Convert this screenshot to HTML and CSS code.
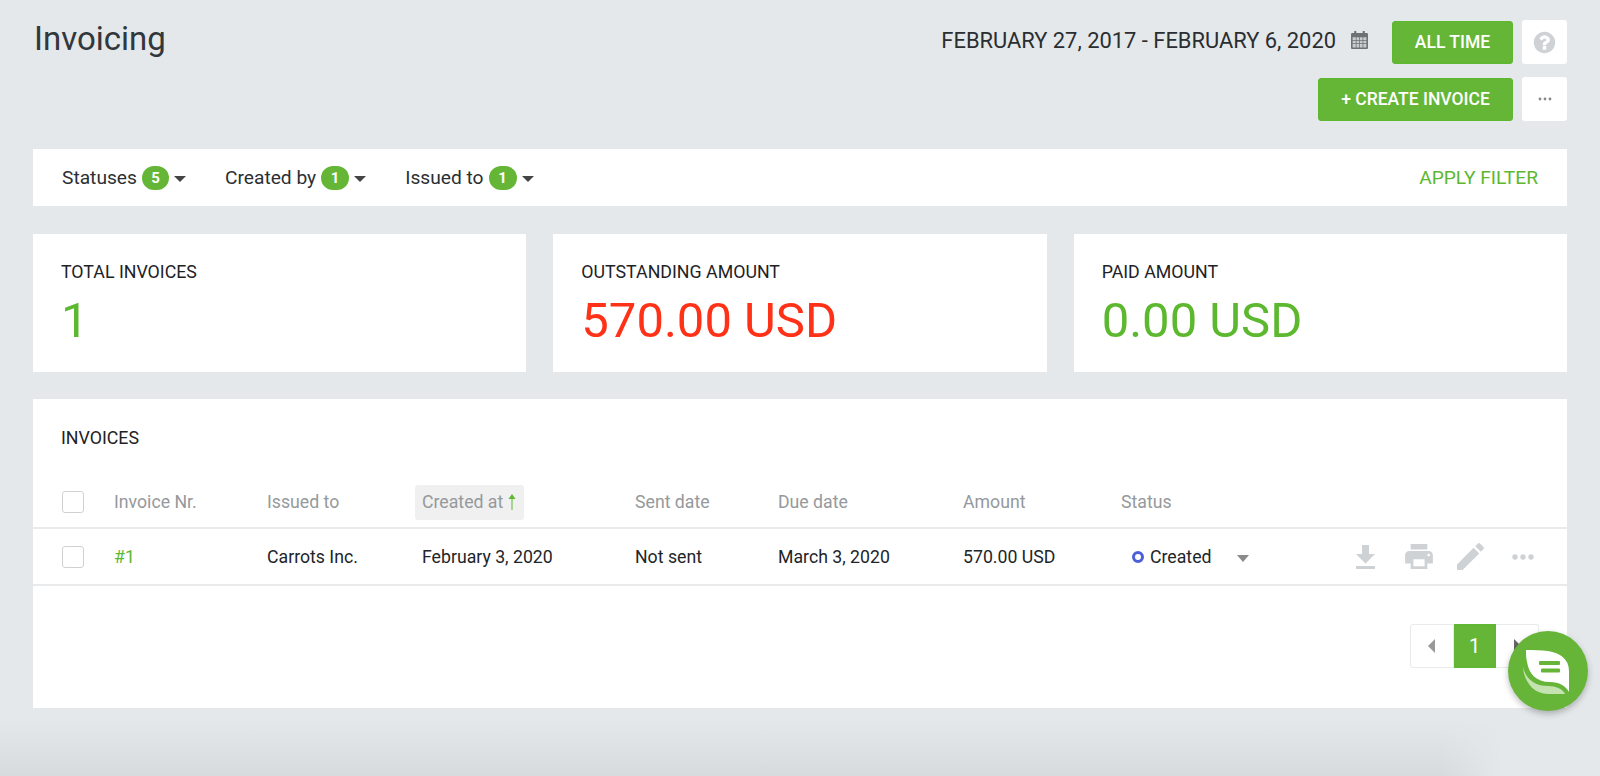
FILE: index.html
```html
<!DOCTYPE html>
<html lang="en">
<head>
  <meta charset="UTF-8">
  <title>Invoicing</title>
  <link rel="stylesheet" href="styles.css">
</head>
<body>
  <div class="page">
    <header class="top">
      <h1>Invoicing</h1>
      <div class="top-actions">
        <div class="action-row">
          <span class="date-range">FEBRUARY 27, 2017 - FEBRUARY 6, 2020</span>
          <svg class="cal-icon" viewBox="0 0 16 17">
            <path d="M3 0h2v2h6V0h2v2h2a1 1 0 0 1 1 1v13a1 1 0 0 1-1 1H1a1 1 0 0 1-1-1V3a1 1 0 0 1 1-1h2z" fill="#6d7174"/>
            <path d="M1.5 6h3v2.4h-3zM5.2 6h2.5v2.4H5.2zM8.4 6h2.5v2.4H8.4zM11.6 6h2.9v2.4h-2.9zM1.5 9.1h3v2.4h-3zM5.2 9.1h2.5v2.4H5.2zM8.4 9.1h2.5v2.4H8.4zM11.6 9.1h2.9v2.4h-2.9zM1.5 12.2h3v3.3h-3zM5.2 12.2h2.5v3.3H5.2zM8.4 12.2h2.5v3.3H8.4zM11.6 12.2h2.9v3.3h-2.9z" fill="#c9cccf"/>
          </svg>
          <button class="btn btn-time">ALL TIME</button>
          <span class="square-btn">
            <svg class="help-icon" viewBox="0 0 1792 1792"><path fill="#cfd2d5" d="M1024 1376v-192q0-14-9-23t-23-9H800q-14 0-23 9t-9 23v192q0 14 9 23t23 9h192q14 0 23-9t9-23zm256-672q0-88-55.5-163T1086 425t-170-41q-243 0-371 213-15 24 8 42l132 100q7 6 19 6 16 0 25-12 53-68 86-92 34-24 86-24 48 0 85.5 26t37.5 59q0 38-20 61t-68 45q-63 28-115.5 86.5T768 1020v36q0 14 9 23t23 9h192q14 0 23-9t9-23q0-19 21.5-49.5T1100 957q32-18 49-28.5t46-35 44.5-48 28-60.5 12.5-81zm384 192q0 209-103 385.5T1281 1561t-385 103-385-103-279.5-279.5T128 896t103-385.5T510.5 231 896 128t385 103 279.5 279.5T1664 896z"/></svg>
          </span>
        </div>
        <div class="action-row">
          <button class="btn btn-create">+ CREATE INVOICE</button>
          <span class="square-btn">
            <svg class="small-dots" viewBox="0 0 14 4"><circle cx="2" cy="2" r="1.4"/><circle cx="7" cy="2" r="1.4"/><circle cx="12" cy="2" r="1.4"/></svg>
          </span>
        </div>
      </div>
    </header>

    <section class="filter-bar">
      <div class="filter">Statuses <span class="count count-first">5</span><span class="caret"></span></div>
      <div class="filter">Created by <span class="count">1</span><span class="caret"></span></div>
      <div class="filter">Issued to <span class="count">1</span><span class="caret"></span></div>
      <a class="apply" href="#">APPLY FILTER</a>
    </section>

    <section class="stats">
      <div class="stat">
        <div class="stat-label">TOTAL INVOICES</div>
        <div class="stat-value green">1</div>
      </div>
      <div class="stat">
        <div class="stat-label">OUTSTANDING AMOUNT</div>
        <div class="stat-value red">570.00 USD</div>
      </div>
      <div class="stat">
        <div class="stat-label">PAID AMOUNT</div>
        <div class="stat-value green">0.00 USD</div>
      </div>
    </section>

    <section class="invoices">
      <h2>INVOICES</h2>
      <div class="row head-row">
        <span class="check"></span>
        <span>Invoice Nr.</span>
        <span>Issued to</span>
        <span class="sorted">Created at <svg class="arrow" viewBox="0 0 8 16"><path d="M4 0L7.5 5H4.5V16H3.5V5H.5z"/></svg></span>
        <span>Sent date</span>
        <span>Due date</span>
        <span>Amount</span>
        <span>Status</span>
      </div>
      <div class="row body-row">
        <span class="check"></span>
        <a class="inv-link" href="#">#1</a>
        <span>Carrots Inc.</span>
        <span class="created-cell">February 3, 2020</span>
        <span>Not sent</span>
        <span>March 3, 2020</span>
        <span>570.00 USD</span>
        <span class="status"><span class="dot"></span>Created<span class="status-caret"></span></span>
        <span class="row-icons">
          <svg class="icon-dl" viewBox="0 0 19 24"><path d="M6 0h7v9h6l-9.5 9.5L0 9h6zM0 21h19v3H0z"/></svg>
          <svg class="icon-print" viewBox="2 3 20 18"><path d="M19 8H5c-1.66 0-3 1.34-3 3v6h4v4h12v-4h4v-6c0-1.66-1.34-3-3-3zm-3 11H8v-5h8v5zm3-7c-.55 0-1-.45-1-1s.45-1 1-1 1 .45 1 1-.45 1-1 1zm-1-9H6v4h12V3z"/></svg>
          <svg class="icon-edit" viewBox="3 3 18 18"><path d="M3 17.25V21h3.75L17.81 9.94l-3.75-3.75L3 17.25zM20.71 7.04c.39-.39.39-1.02 0-1.41l-2.34-2.34c-.39-.39-1.02-.39-1.41 0l-1.83 1.83 3.75 3.75 1.83-1.83z"/></svg>
          <svg class="icon-dots" viewBox="0 0 22 6"><circle cx="3" cy="3" r="2.7"/><circle cx="11" cy="3" r="2.7"/><circle cx="19" cy="3" r="2.7"/></svg>
        </span>
      </div>
      <div class="pager">
        <span class="page-btn"><span class="tri-left"></span></span>
        <span class="page-btn current">1</span>
        <span class="page-btn"><span class="tri-right"></span></span>
      </div>
    </section>
  </div>

  <div class="bottom-shade"></div>

  <div class="chat">
    <svg viewBox="0 0 80 80" width="80" height="80">
      <path d="M15 36c1 14 10 27 25 27h17c-2-5-9-8-17-8-12 0-22-6-25-19z" fill="#c5e3b1"/>
      <path d="M18 19c8 0 15 0 22 1 12 2 21 8 21 20v21c-3-6-10-10-19-10-14 0-21-8-23-20-1-4-1-8-1-12z" fill="#fff"/>
      <rect x="31" y="30" width="21" height="4" rx="1" fill="#66b538"/>
      <rect x="33" y="37.5" width="19" height="4" rx="1" fill="#66b538"/>
    </svg>
  </div>
</body>
</html>
```

FILE: styles.css
```css
* {
  box-sizing: border-box;
}
html, body {
  height: 100%;
}
body {
  margin: 0;
  overflow: hidden;
  background-color: #e4e8eb;
  color: #212529;
  font-family: Roboto, Arial, sans-serif;
  font-size: 17.7px;
}
.page {
  padding: 20px 33px 0;
}

/* header */
.top {
  display: flex;
  justify-content: space-between;
  align-items: flex-start;
  height: 129px;
}
.top h1 {
  margin: 0;
  font-size: 33px;
  font-weight: 400;
  line-height: 38px;
  color: #32373b;
  padding-left: 1px;
}
.top-actions {
  display: flex;
  flex-direction: column;
  align-items: flex-end;
  gap: 13px;
}
.action-row {
  display: flex;
  align-items: center;
}
.date-range {
  font-size: 21.9px;
  color: #2a2e31;
  margin-bottom: 4px;
}
.cal-icon {
  width: 17px;
  height: 18px;
  margin: 0 24px 4px 15px;
}
.btn {
  border: 1px solid #5cb82f;
  border-radius: 3px;
  background: #65b636;
  color: #fff;
  font-family: inherit;
  font-size: 17.5px;
  font-weight: 500;
  height: 43px;
  padding: 0;
}
.btn-time {
  width: 121px;
}
.btn-create {
  width: 195px;
}
.square-btn {
  width: 45px;
  height: 44px;
  margin-left: 9px;
  background: #fff;
  border-radius: 3px;
  display: flex;
  align-items: center;
  justify-content: center;
}
.help-icon {
  width: 25px;
  height: 25px;
}
.small-dots {
  width: 14px;
  height: 4px;
  fill: #888;
}

/* filter bar */
.filter-bar {
  display: flex;
  align-items: center;
  gap: 39px;
  height: 57px;
  padding: 0 29px 0 29px;
  background: #fff;
  font-size: 19.2px;
  color: #2b2f33;
}
.filter {
  display: flex;
  align-items: center;
  gap: 5px;
}
.count {
  width: 28px;
  height: 24px;
  border-radius: 12px;
  background: #65b636;
  color: #fff;
  font-size: 15px;
  font-weight: 700;
  text-align: center;
  line-height: 24px;
}
.count-first {
  width: 27px;
}
.caret {
  width: 0;
  height: 0;
  border-left: 6px solid transparent;
  border-right: 6px solid transparent;
  border-top: 6px solid #444;
  margin-top: 2px;
}
.apply {
  margin-left: auto;
  color: #5cb82f;
  text-decoration: none;
}

/* stat cards */
.stats {
  display: grid;
  grid-template-columns: repeat(3, 1fr);
  gap: 27px;
  margin-top: 28px;
}
.stat {
  height: 138px;
  background: #fff;
  padding: 28px 28px;
}
.stat-label {
  font-size: 17.8px;
  line-height: 20px;
  color: #1e2225;
}
.stat-value {
  font-size: 49px;
  line-height: 60px;
  margin-top: 9px;
}
.green {
  color: #5cb82f;
}
.red {
  color: #ff3218;
}

/* invoices table */
.invoices {
  height: 309px;
  margin-top: 27px;
  background: #fff;
}
.invoices h2 {
  margin: 0;
  padding: 29px 0 0 28px;
  font-size: 17.8px;
  font-weight: 400;
  line-height: 20px;
  color: #1e2225;
}
.row {
  display: grid;
  grid-template-columns: 52px 153px 148px 220px 143px 185px 158px 235px 1fr;
  align-items: center;
  padding-left: 29px;
  border-bottom: 2px solid #e8eaec;
}
.head-row {
  height: 81px;
  padding-top: 29px;
  color: #95999c;
}
.body-row {
  height: 57px;
  color: #212529;
}
.check {
  width: 22px;
  height: 22px;
  border: 1px solid #cfd2d5;
  border-radius: 3px;
}
.body-row .check {
  margin-top: 1px;
}
.sorted {
  justify-self: start;
  display: flex;
  align-items: center;
  gap: 5px;
  width: 109px;
  height: 35px;
  padding: 0 7px;
  border-radius: 3px;
  background: #f0f0f0;
}
.arrow {
  width: 8px;
  height: 16px;
  fill: #5cb82f;
}
.created-cell {
  padding-left: 7px;
}
.inv-link {
  color: #5cb82f;
  text-decoration: none;
}
.status {
  display: flex;
  align-items: center;
  padding-left: 11px;
}
.dot {
  width: 12px;
  height: 12px;
  border: 3px solid #4d5fd8;
  border-radius: 50%;
  margin-right: 6px;
}
.status-caret {
  width: 0;
  height: 0;
  border-left: 6px solid transparent;
  border-right: 6px solid transparent;
  border-top: 7px solid #8a8a8a;
  margin-left: 26px;
  margin-top: 3px;
}
.row-icons {
  display: flex;
  align-items: center;
  fill: #cfd2d5;
}
.icon-dl {
  width: 19px;
  height: 24px;
}
.icon-print {
  width: 28px;
  height: 25px;
  margin-left: 30px;
}
.icon-edit {
  width: 27px;
  height: 27px;
  margin-left: 24px;
}
.icon-dots {
  width: 22px;
  height: 6px;
  margin-left: 28px;
}

/* pager */
.pager {
  display: flex;
  width: 129px;
  height: 44px;
  margin: 38px 28px 0 auto;
}
.page-btn {
  flex: 1;
  display: flex;
  align-items: center;
  justify-content: center;
  border: 1px solid #e8eaec;
  border-left: 0;
}
.page-btn:first-child {
  border-left: 1px solid #e8eaec;
  border-radius: 3px 0 0 3px;
}
.page-btn:last-child {
  border-radius: 0 3px 3px 0;
}
.page-btn.current {
  background: #65b636;
  border-color: #5cb82f;
  color: #fff;
  font-size: 20px;
}
.tri-left {
  border-top: 7px solid transparent;
  border-bottom: 7px solid transparent;
  border-right: 7px solid #999;
}
.tri-right {
  border-top: 7px solid transparent;
  border-bottom: 7px solid transparent;
  border-left: 7px solid #666;
}

/* overlays */
.bottom-shade {
  position: absolute;
  left: 0;
  right: 100px;
  bottom: 0;
  height: 55px;
  background: linear-gradient(to bottom, rgba(214, 218, 221, 0), #d6dadd);
  -webkit-mask-image: linear-gradient(to right, #000 calc(100% - 60px), transparent);
  mask-image: linear-gradient(to right, #000 calc(100% - 60px), transparent);
  pointer-events: none;
}
.chat {
  position: absolute;
  left: 1508px;
  top: 631px;
  width: 80px;
  height: 80px;
  border-radius: 50%;
  background: #66b538;
  box-shadow: 0 3px 6px rgba(0, 0, 0, 0.25);
}
```
